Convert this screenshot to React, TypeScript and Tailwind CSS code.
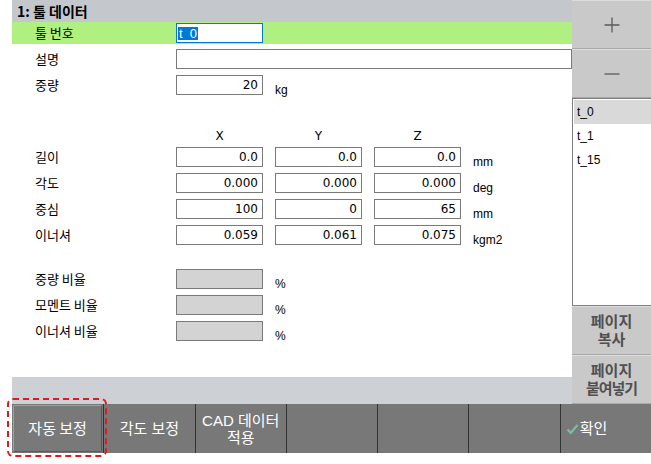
import React from "react";

const KR = "font-['Noto_Sans_CJK_KR','Noto_Sans',sans-serif]";
const NUM = "font-['DejaVu_Sans',sans-serif]";
const LAT = "font-['Liberation_Sans','Noto_Sans_CJK_KR',sans-serif]";

function Box({ value, w = "w-[87px]", gray = false }: { value?: string; w?: string; gray?: boolean }) {
  return (
    <div
      className={`${w} h-[20px] shrink-0 border border-[#7a7a7a] ${gray ? "bg-[#d3d3d3]" : "bg-white"} flex items-center justify-end pr-[4px] ${NUM} text-[12px] text-black`}
    >
      {value}
    </div>
  );
}

function Label({ children }: { children: React.ReactNode }) {
  return <span className={`w-[141px] shrink-0 text-[13px] text-black ${KR}`}>{children}</span>;
}

function Unit({ children }: { children: React.ReactNode }) {
  return <span className={`ml-[12px] translate-y-[5px] text-[12px] text-black ${LAT}`}>{children}</span>;
}

function XYZRow({ label, v, unit }: { label: string; v: string[]; unit: string }) {
  return (
    <div className="h-[20px] flex items-center">
      <Label>{label}</Label>
      <div className="flex gap-[12px]">
        <Box value={v[0]} />
        <Box value={v[1]} />
        <Box value={v[2]} />
      </div>
      <Unit>{unit}</Unit>
    </div>
  );
}

function RatioRow({ label }: { label: string }) {
  return (
    <div className="h-[20px] flex items-center">
      <Label>{label}</Label>
      <Box gray />
      <Unit>%</Unit>
    </div>
  );
}

function SideButton({ children, h = "h-[49px]" }: { children: React.ReactNode; h?: string }) {
  return (
    <div
      className={`${h} shrink-0 bg-[#c9c9c9] border-t border-[#dedede] border-b border-b-[#a9a9a9] flex flex-col items-center justify-center text-[#505050] font-semibold text-[15px] leading-[18px] ${LAT}`}
    >
      {children}
    </div>
  );
}

function BarButton({ children, first = false }: { children?: React.ReactNode; first?: boolean }) {
  return (
    <div
      className={`h-full flex flex-col items-center justify-center text-white text-[15px] leading-[17px] ${LAT} ${first ? "" : "border-l border-[#333333]"}`}
    >
      {children}
    </div>
  );
}

export default function App() {
  return (
    <div className={`w-[651px] h-[464px] bg-white relative overflow-hidden ${KR}`}>
      <div className="flex">
        <div className="w-[12px] shrink-0" />
        <div className="w-[560px] h-[404px] flex flex-col shrink-0">
          <div className="h-[22px] bg-[#c4c8cc] pl-[5px] flex items-center text-[14px] font-bold text-black">
            1: 툴 데이터
          </div>
          <div className="h-[22px] bg-[#b0f080] flex items-center pl-[23px]">
            <Label>툴 번호</Label>
            <div className="w-[87px] h-[20px] border border-[#0078d7] bg-white flex items-center pl-[1px]">
              <span className={`bg-[#0078d7] text-white text-[13px] leading-[13px] px-[1px] ${LAT}`}>t_0</span>
            </div>
          </div>
          <div className="flex-1 flex flex-col pl-[23px] pt-[5px]">
            <div className="h-[20px] flex items-center">
              <Label>설명</Label>
              <Box w="w-[396px]" />
            </div>
            <div className="h-[20px] flex items-center mt-[6px]">
              <Label>중량</Label>
              <Box value="20" />
              <Unit>kg</Unit>
            </div>
            <div className={`h-[16px] mt-[33px] flex items-center pl-[141px] gap-[12px] text-[12px] text-black ${NUM}`}>
              <span className="w-[87px] text-center">X</span>
              <span className="w-[87px] text-center">Y</span>
              <span className="w-[87px] text-center">Z</span>
            </div>
            <div className="flex flex-col gap-[6px] mt-[3px]">
              <XYZRow label="길이" v={["0.0", "0.0", "0.0"]} unit="mm" />
              <XYZRow label="각도" v={["0.000", "0.000", "0.000"]} unit="deg" />
              <XYZRow label="중심" v={["100", "0", "65"]} unit="mm" />
              <XYZRow label="이너셔" v={["0.059", "0.061", "0.075"]} unit="kgm2" />
            </div>
            <div className="flex flex-col gap-[6px] mt-[24px]">
              <RatioRow label="중량 비율" />
              <RatioRow label="모멘트 비율" />
              <RatioRow label="이너셔 비율" />
            </div>
          </div>
          <div className="h-[27px] bg-[#cdd0d4] shrink-0" />
        </div>
        <div className="w-[79px] h-[404px] flex flex-col shrink-0">
          <SideButton>
            <svg width="18" height="18" viewBox="0 0 18 18">
              <path d="M9 1.5V16.5M1.5 9H16.5" stroke="#5a5a5a" strokeWidth="1.3" />
            </svg>
          </SideButton>
          <SideButton>
            <svg width="18" height="18" viewBox="0 0 18 18">
              <path d="M1.5 9H16.5" stroke="#5a5a5a" strokeWidth="1.3" />
            </svg>
          </SideButton>
          <div className={`h-[208px] shrink-0 border border-r-0 border-[#7f7f7f] bg-white pt-[1px] pl-[1px] text-[12px] text-black ${LAT}`}>
            <div className="h-[24px] bg-[#d9d9d9] flex items-center pl-[3px]">t_0</div>
            <div className="h-[24px] flex items-center pl-[3px]">t_1</div>
            <div className="h-[24px] flex items-center pl-[3px]">t_15</div>
          </div>
          <SideButton>
            <span>페이지</span>
            <span>복사</span>
          </SideButton>
          <SideButton>
            <span>페이지</span>
            <span className="tracking-[-1px]">붙여넣기</span>
          </SideButton>
        </div>
      </div>
      <div className="ml-[12px] h-[49px] bg-[#787878] grid grid-cols-7">
        <div className="h-full p-[1px]">
          <div className={`h-full w-full border border-[#a2a2a2] border-b-[#5a5a5a] border-r-[#5a5a5a] rounded-[2px] bg-[#797979] flex items-center justify-center text-white text-[15px] ${KR}`}>
            자동 보정
          </div>
        </div>
        <BarButton>각도 보정</BarButton>
        <BarButton>
          <span>CAD 데이터</span>
          <span>적용</span>
        </BarButton>
        <BarButton />
        <BarButton />
        <BarButton />
        <div className={`h-full border-l border-[#333333] flex items-center pl-[5px] text-white text-[15px] ${KR}`}>
          <svg width="13" height="12" viewBox="0 0 13 12" className="mr-[1px]">
            <path d="M1.5 6.5L4.8 9.8L11.5 2" stroke="#6cc4a4" strokeWidth="2.2" fill="none" />
          </svg>
          확인
        </div>
      </div>
      <div className="absolute left-[7px] top-[398px] w-[100px] h-[59px] border-2 border-dashed border-[#e8151b] rounded-[6px] pointer-events-none" />
    </div>
  );
}
